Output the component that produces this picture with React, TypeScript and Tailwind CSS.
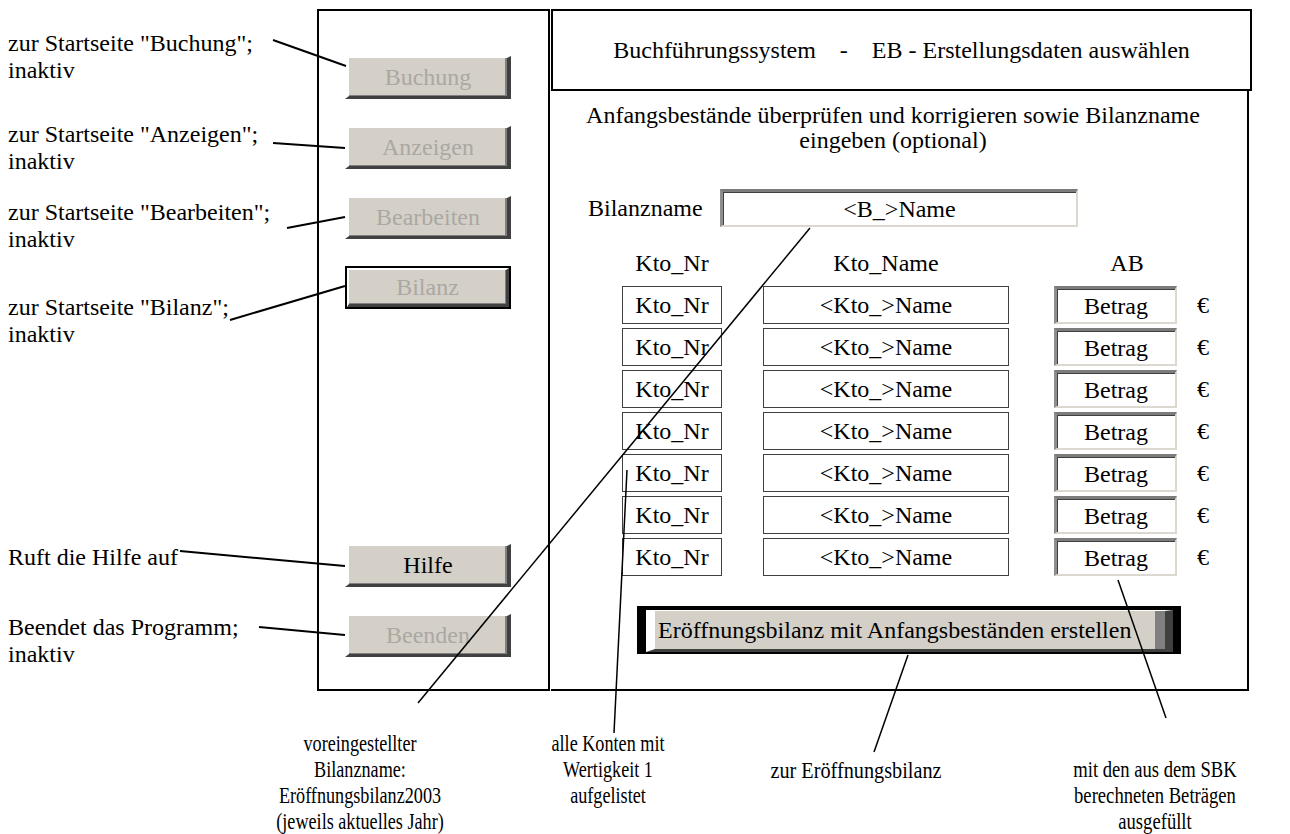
import React from "react";

const SERIF = "font-['Liberation_Serif','Times_New_Roman',serif]";

function NavButton({ label, enabled }: { label: string; enabled?: boolean }) {
  return (
    <div className="w-[166px] h-[43px] flex items-center justify-center bg-[#d4d0c8] border-t-2 border-l-4 border-t-white border-l-white border-r-4 border-b-[3px] border-r-[#404040] border-b-[#404040] shadow-[inset_-2px_-1px_0_#808080]">
      <span className={enabled ? "text-black" : "text-[#aaa8a3]"}>{label}</span>
    </div>
  );
}

function FocusButton({ label }: { label: string }) {
  return (
    <div className="w-[166px] h-[43px] flex border-2 border-black">
      <div className="flex-1 flex items-center justify-center bg-[#d4d0c8] border-t-2 border-l-2 border-t-white border-l-white border-r-[3px] border-b-[3px] border-r-[#404040] border-b-[#404040] shadow-[inset_-1px_-1px_0_#808080] text-[#aaa8a3]">
        {label}
      </div>
    </div>
  );
}

const sunken =
  "bg-white border-t-[3px] border-l-[3px] border-t-[#7c7c7c] border-l-[#8e8e8e] border-r-2 border-b-2 border-r-[#dcd8d0] border-b-[#dcd8d0] shadow-[inset_1px_1px_0_#404040]";

function AccountRow() {
  return (
    <div className="flex items-center h-[38px] ml-[71px]">
      <div className="w-[100px] h-[38px] border border-[#404040] flex items-center justify-center">
        Kto_Nr
      </div>
      <div className="w-[246px] h-[38px] ml-[41px] border border-[#404040] flex items-center justify-center">
        {"<Kto_>Name"}
      </div>
      <div className={`w-[123px] h-[38px] ml-[45px] flex items-center justify-center ${sunken}`}>
        Betrag
      </div>
      <div className="ml-[20px]">€</div>
    </div>
  );
}

function LeftNote({ lines }: { lines: string[] }) {
  return (
    <div className="leading-[27px] whitespace-nowrap">
      {lines.map((l, i) => (
        <div key={i}>{l}</div>
      ))}
    </div>
  );
}

export default function App() {
  const rows = [0, 1, 2, 3, 4, 5, 6];
  const lines: [number, number, number, number][] = [
    [273, 40, 346, 66],
    [273, 143, 345, 148],
    [287, 228, 345, 217],
    [230, 320, 345, 286],
    [180, 551, 345, 566],
    [259, 627, 345, 635],
    [810, 228, 418, 703],
    [627, 470, 614, 733],
    [908, 655, 874, 752],
    [1118, 580, 1166, 718],
  ];
  return (
    <div className={`relative w-[1290px] h-[834px] overflow-hidden bg-white text-black text-[24px] ${SERIF}`}>
      {/* top section */}
      <div className="flex h-[691px]">
        {/* left annotations */}
        <div className="w-[317px] pl-[8px] flex flex-col">
          <div className="mt-[30px]">
            <LeftNote lines={['zur Startseite "Buchung";', "inaktiv"]} />
          </div>
          <div className="mt-[37px]">
            <LeftNote lines={['zur Startseite "Anzeigen";', "inaktiv"]} />
          </div>
          <div className="mt-[24px]">
            <LeftNote lines={['zur Startseite "Bearbeiten";', "inaktiv"]} />
          </div>
          <div className="mt-[41px]">
            <LeftNote lines={['zur Startseite "Bilanz";', "inaktiv"]} />
          </div>
          <div className="mt-[196px]">
            <LeftNote lines={["Ruft die Hilfe auf"]} />
          </div>
          <div className="mt-[43px]">
            <LeftNote lines={["Beendet das Programm;", "inaktiv"]} />
          </div>
        </div>

        {/* frame */}
        <div className="mt-[9px] flex">
          {/* navigation column */}
          <div className="w-[233px] h-[682px] border-2 border-black pl-[26px] pt-[45px] flex flex-col">
            <NavButton label="Buchung" />
            <div className="mt-[27px]">
              <NavButton label="Anzeigen" />
            </div>
            <div className="mt-[27px]">
              <NavButton label="Bearbeiten" />
            </div>
            <div className="mt-[27px]">
              <FocusButton label="Bilanz" />
            </div>
            <div className="mt-[235px]">
              <NavButton label="Hilfe" enabled />
            </div>
            <div className="mt-[27px]">
              <NavButton label="Beenden" />
            </div>
          </div>

          {/* main area */}
          <div className="ml-[1px] flex flex-col">
            <div className="w-[701px] h-[82px] border-2 border-black flex items-center justify-center whitespace-pre">
              {"Buchführungssystem    -    EB - Erstellungsdaten auswählen"}
            </div>
            <div className="w-[698px] h-[600px] border-r-2 border-b-2 border-black flex flex-col">
              <div className="pt-[12px] pr-[12px] text-center leading-[25px]">
                <div>Anfangsbestände überprüfen und korrigieren sowie Bilanzname</div>
                <div>eingeben (optional)</div>
              </div>

              <div className="mt-[36px] flex items-center">
                <div className="ml-[37px] w-[132px] whitespace-nowrap">Bilanzname</div>
                <div className={`w-[358px] h-[38px] flex items-center justify-center ${sunken}`}>
                  {"<B_>Name"}
                </div>
              </div>

              <div className="mt-[22px] ml-[71px] flex h-[28px] items-center">
                <div className="w-[100px] text-center">Kto_Nr</div>
                <div className="w-[246px] ml-[41px] text-center">Kto_Name</div>
                <div className="w-[123px] ml-[45px] pl-[23px] text-center">AB</div>
              </div>

              <div className="mt-[9px] flex flex-col gap-[4px]">
                {rows.map((r) => (
                  <AccountRow key={r} />
                ))}
              </div>

              <div className="ml-[86px] mt-[30px] w-[544px] h-[48px] bg-black pt-[4px] pl-[9px] pr-[8px] pb-[2px] flex">
                <div className="flex-1 flex border-t border-l-[9px] border-t-white border-l-white border-r-[8px] border-r-[#404040] border-b-[3px] border-b-[#404040]">
                  <div className="flex-1 flex items-center bg-[#d4d0c8] border-r-[10px] border-r-[#808080] overflow-hidden whitespace-nowrap pl-[3px]">
                    Eröffnungsbilanz mit Anfangsbeständen erstellen
                  </div>
                </div>
              </div>
            </div>
          </div>
        </div>
      </div>

      {/* bottom annotations */}
      <div className="flex items-start text-[23px] leading-[26px] text-center whitespace-nowrap">
        <div className="ml-[240px] w-[240px] pt-[40px] scale-x-[0.79]">
          <div>voreingestellter</div>
          <div>Bilanzname:</div>
          <div>Eröffnungsbilanz2003</div>
          <div>(jeweils aktuelles Jahr)</div>
        </div>
        <div className="w-[256px] pt-[40px] scale-x-[0.79]">
          <div>alle Konten mit</div>
          <div>Wertigkeit 1</div>
          <div>aufgelistet</div>
        </div>
        <div className="w-[240px] pt-[67px] scale-x-[0.88]">
          <div>zur Eröffnungsbilanz</div>
        </div>
        <div className="w-[314px] pl-[44px] pt-[66px]">
          <div className="scale-x-[0.81]">
            <div>mit den aus dem SBK</div>
            <div>berechneten Beträgen</div>
            <div>ausgefüllt</div>
          </div>
        </div>
      </div>

      {/* leader lines */}
      <svg
        className="absolute inset-0 pointer-events-none"
        width="1290"
        height="834"
        viewBox="0 0 1290 834"
      >
        {lines.map(([x1, y1, x2, y2], i) => (
          <line key={i} x1={x1} y1={y1} x2={x2} y2={y2} stroke="black" strokeWidth={i < 6 ? 2 : 1.5} />
        ))}
      </svg>
    </div>
  );
}
